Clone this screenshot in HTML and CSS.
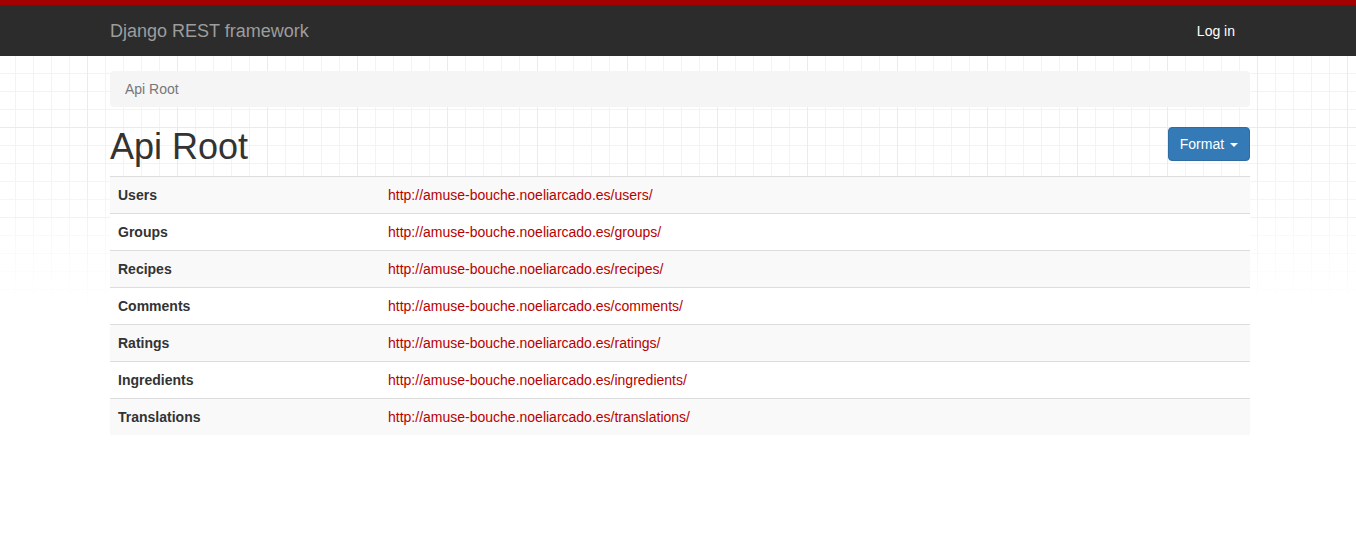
FILE: index.html
```html
<!DOCTYPE html>
<html lang="en">
<head>
<meta charset="utf-8">
<title>Api Root – Django REST framework</title>
<link rel="stylesheet" href="styles.css">
</head>
<body>
  <header class="navbar">
    <div class="container navbar-inner">
      <a class="brand" href="#">Django REST framework</a>
      <a class="login" href="#">Log in</a>
    </div>
  </header>

  <main class="container">
    <ul class="breadcrumb">
      <li class="active">Api Root</li>
    </ul>

    <div class="page-header">
      <h1>Api Root</h1>
      <button class="btn-format" type="button">Format <span class="caret"></span></button>
    </div>

    <table class="table">
      <tbody>
        <tr><th>Users</th><td><a href="#">http://amuse-bouche.noeliarcado.es/users/</a></td></tr>
        <tr><th>Groups</th><td><a href="#">http://amuse-bouche.noeliarcado.es/groups/</a></td></tr>
        <tr><th>Recipes</th><td><a href="#">http://amuse-bouche.noeliarcado.es/recipes/</a></td></tr>
        <tr><th>Comments</th><td><a href="#">http://amuse-bouche.noeliarcado.es/comments/</a></td></tr>
        <tr><th>Ratings</th><td><a href="#">http://amuse-bouche.noeliarcado.es/ratings/</a></td></tr>
        <tr><th>Ingredients</th><td><a href="#">http://amuse-bouche.noeliarcado.es/ingredients/</a></td></tr>
        <tr><th>Translations</th><td><a href="#">http://amuse-bouche.noeliarcado.es/translations/</a></td></tr>
      </tbody>
    </table>
  </main>
</body>
</html>
```

FILE: styles.css
```css
* {
  box-sizing: border-box;
}

html {
  min-height: 100%;
  background: #fff;
}

body {
  margin: 0;
  min-height: 100vh;
  font-family: "Liberation Sans", Arial, sans-serif;
  font-size: 14px;
  line-height: 20px;
  color: #333;
  background-color: #fff;
  background-image:
    linear-gradient(to bottom, rgba(255, 255, 255, 0) 170px, #fff 308px),
    linear-gradient(to right, #ebebeb 1px, transparent 1px),
    linear-gradient(to bottom, #ebebeb 1px, transparent 1px),
    linear-gradient(to right, #f3f3f3 1px, transparent 1px),
    linear-gradient(to bottom, #f3f3f3 1px, transparent 1px);
  background-size:
    100% 100%,
    90px 90px,
    90px 90px,
    18px 18px,
    18px 18px;
  background-position:
    0 0,
    87px 37px,
    87px 37px,
    15px 1px,
    15px 1px;
  background-repeat: no-repeat, repeat, repeat, repeat, repeat;
}

a {
  text-decoration: none;
}

.container {
  width: 1144px;
  padding-left: 4px;
  margin: 0 auto;
}

/* Navbar */
.navbar {
  background: #2c2c2c;
  border-top: 5px solid #a30000;
  height: 56px;
}

.navbar-inner {
  display: flex;
  align-items: center;
  justify-content: space-between;
  height: 51px;
}

.brand {
  font-size: 18px;
  line-height: 20px;
  color: #9d9d9d;
}

.login {
  color: #fff;
  font-size: 14px;
  line-height: 20px;
  margin-right: 15px;
}

/* Breadcrumb */
.breadcrumb {
  list-style: none;
  margin: 15px 0 20px;
  padding: 8px 15px;
  background: #f5f5f5;
  border-radius: 4px;
  height: 36px;
}

.breadcrumb .active {
  color: #777;
}

/* Header */
.page-header {
  display: flex;
  justify-content: space-between;
  align-items: flex-start;
  margin-bottom: 9px;
}

.page-header h1 {
  margin: 0;
  font-size: 36px;
  line-height: 40px;
  font-weight: 500;
  color: #333;
}

.btn-format {
  margin-top: 0;
  padding: 6px 11px;
  font-family: inherit;
  font-size: 14px;
  line-height: 20px;
  color: #fff;
  background: #337ab7;
  border: 1px solid #2e6da4;
  border-radius: 4px;
  height: 34px;
  cursor: pointer;
}

.caret {
  display: inline-block;
  width: 0;
  height: 0;
  margin-left: 2px;
  vertical-align: middle;
  border-top: 4px solid #fff;
  border-left: 4px solid transparent;
  border-right: 4px solid transparent;
}

/* Table */
.table {
  width: 1140px;
  border-collapse: collapse;
  border-spacing: 0;
}

.table th,
.table td {
  padding: 8px;
  line-height: 20px;
  border-top: 1px solid #ddd;
  text-align: left;
  vertical-align: top;
}

.table th {
  width: 270px;
  font-weight: bold;
  color: #333;
}

.table tr:nth-child(odd) {
  background: #f9f9f9;
}

.table tr:nth-child(even) {
  background: #fff;
}

.table td a {
  color: #b80000;
}
```
